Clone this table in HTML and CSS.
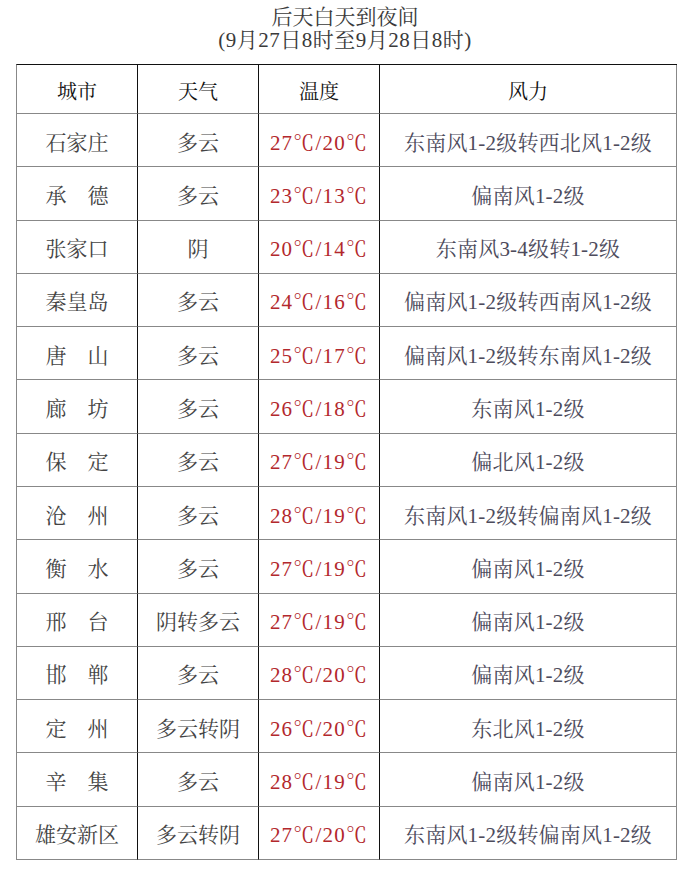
FILE: index.html
```html
<!DOCTYPE html>
<html lang="zh-CN">
<head>
<meta charset="utf-8">
<title>后天白天到夜间</title>
<link rel="stylesheet" href="styles.css">
</head>
<body>
<div class="title">
  <div class="t1">后天白天到夜间</div>
  <div class="t2">(9月27日8时至9月28日8时)</div>
</div>
<div class="grid">
  <div class="c h">城市</div><div class="c h">天气</div><div class="c h">温度</div><div class="c h">风力</div>

  <div class="c city">石家庄</div><div class="c wx">多云</div><div class="c tp">27℃/20℃</div><div class="c wd">东南风1-2级转西北风1-2级</div>
  <div class="c city">承　德</div><div class="c wx">多云</div><div class="c tp">23℃/13℃</div><div class="c wd">偏南风1-2级</div>
  <div class="c city">张家口</div><div class="c wx">阴</div><div class="c tp">20℃/14℃</div><div class="c wd">东南风3-4级转1-2级</div>
  <div class="c city">秦皇岛</div><div class="c wx">多云</div><div class="c tp">24℃/16℃</div><div class="c wd">偏南风1-2级转西南风1-2级</div>
  <div class="c city">唐　山</div><div class="c wx">多云</div><div class="c tp">25℃/17℃</div><div class="c wd">偏南风1-2级转东南风1-2级</div>
  <div class="c city">廊　坊</div><div class="c wx">多云</div><div class="c tp">26℃/18℃</div><div class="c wd">东南风1-2级</div>
  <div class="c city">保　定</div><div class="c wx">多云</div><div class="c tp">27℃/19℃</div><div class="c wd">偏北风1-2级</div>
  <div class="c city">沧　州</div><div class="c wx">多云</div><div class="c tp">28℃/19℃</div><div class="c wd">东南风1-2级转偏南风1-2级</div>
  <div class="c city">衡　水</div><div class="c wx">多云</div><div class="c tp">27℃/19℃</div><div class="c wd">偏南风1-2级</div>
  <div class="c city">邢　台</div><div class="c wx">阴转多云</div><div class="c tp">27℃/19℃</div><div class="c wd">偏南风1-2级</div>
  <div class="c city">邯　郸</div><div class="c wx">多云</div><div class="c tp">28℃/20℃</div><div class="c wd">偏南风1-2级</div>
  <div class="c city">定　州</div><div class="c wx">多云转阴</div><div class="c tp">26℃/20℃</div><div class="c wd">东北风1-2级</div>
  <div class="c city">辛　集</div><div class="c wx">多云</div><div class="c tp">28℃/19℃</div><div class="c wd">偏南风1-2级</div>
  <div class="c city">雄安新区</div><div class="c wx">多云转阴</div><div class="c tp">27℃/20℃</div><div class="c wd">东南风1-2级转偏南风1-2级</div>
</div>
</body>
</html>
```
FILE: styles.css
```css
html, body {
  margin: 0;
  padding: 0;
  background: #ffffff;
}
body {
  font-family: "Liberation Serif", "Noto Serif CJK SC", "Noto Sans CJK SC", serif;
}
.title {
  padding-top: 6px;
  text-align: center;
  color: #3a3a3a;
  font-size: 21px;
  line-height: 23px;
}
.t2 {
  letter-spacing: 0.5px;
}
.grid {
  margin: 12px 0 0 16px;
  width: 661px;
  height: 796px;
  box-sizing: border-box;
  border-top: 1px solid #111;
  border-left: 1px solid #888;
  display: grid;
  grid-template-columns: 121px 121px 121px 297px;
  grid-template-rows: 49px repeat(14, 1fr);
}
.c {
  border-right: 1px solid #111;
  border-bottom: 1px solid #888;
  display: flex;
  align-items: center;
  justify-content: center;
  padding-top: 1px;
  box-sizing: border-box;
  font-size: 21px;
  color: #444;
  white-space: nowrap;
}
.c:nth-child(4n) {
  border-right-color: #888;
}
.h {
  color: #111;
  font-size: 20px;
  padding-top: 3px;
}
.tp {
  color: #b3282d;
  letter-spacing: 1.2px;
}
.wd {
  color: #4d4b5c;
  letter-spacing: 0.2px;
}
```
